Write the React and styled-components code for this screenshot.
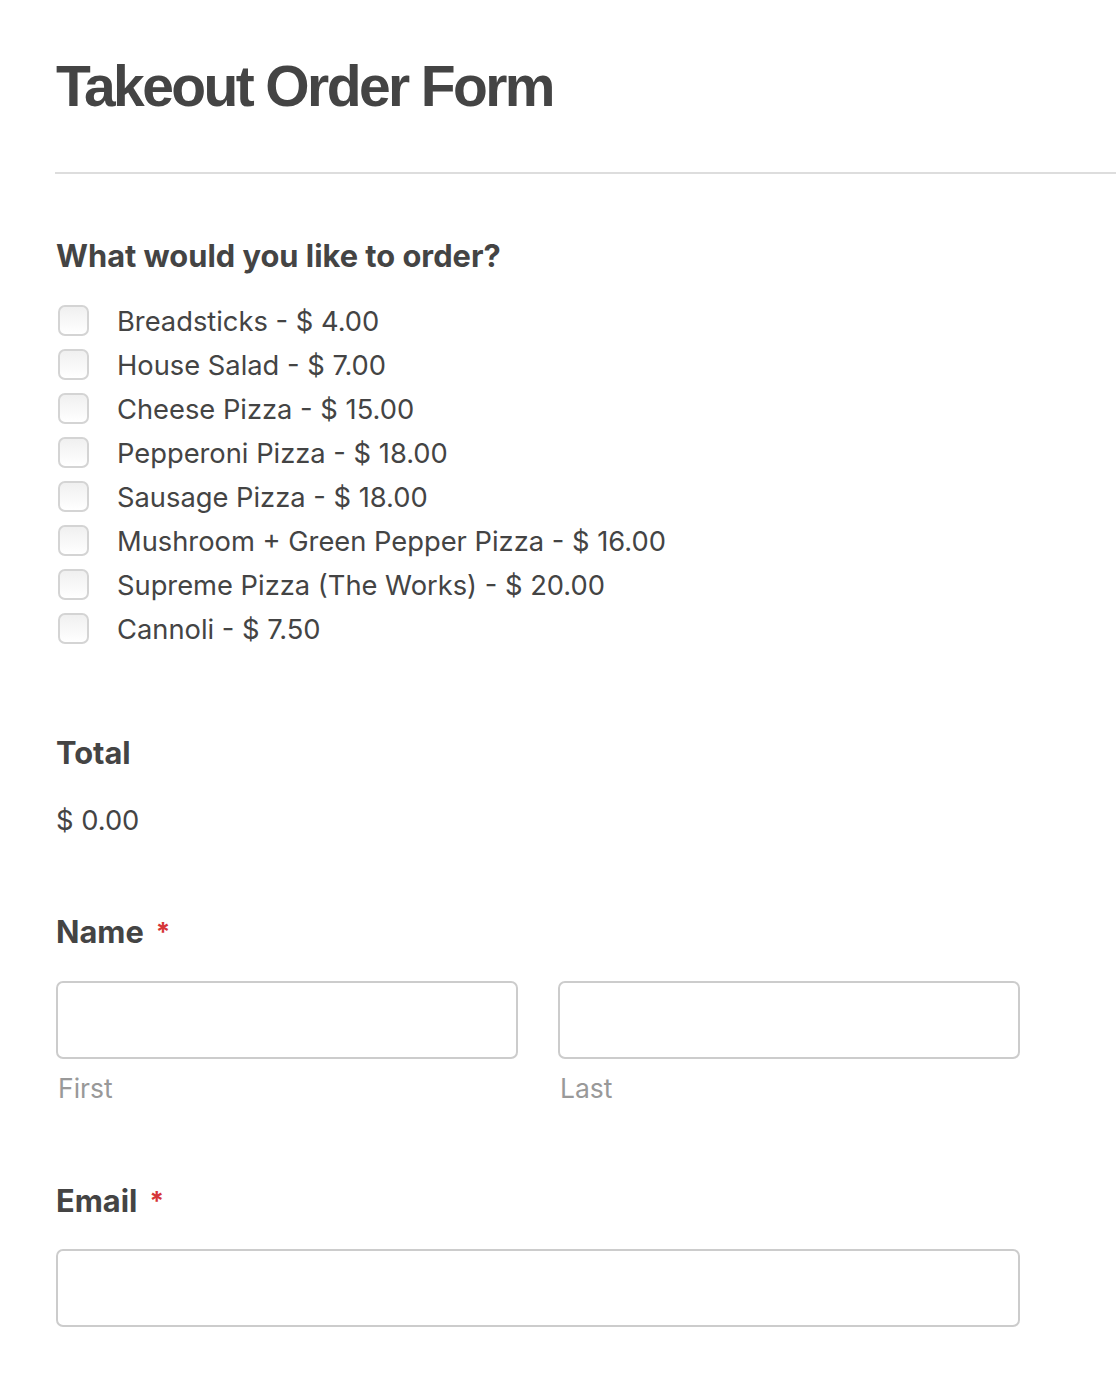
import React from "react";
import styled, { createGlobalStyle } from "styled-components";

const GlobalStyle = createGlobalStyle`
  body {
    margin: 0;
    background: #ffffff;
    font-family: Inter, "Noto Sans", sans-serif;
    color: #444444;
  }
`;

const Page = styled.div`
  padding: 52px 0 60px 56px;
`;

const Title = styled.h1`
  margin: 0;
  font-family: "Liberation Sans", Arial, sans-serif;
  font-size: 57px;
  font-weight: 700;
  line-height: 68px;
  letter-spacing: -2.6px;
  color: #444444;
`;

const Rule = styled.hr`
  border: none;
  border-top: 2px solid #dddddd;
  margin: 52px 0 0 -1px;
`;

const Form = styled.form`
  width: 964px;
  padding-top: 62px;
`;

const Field = styled.div`
  margin-bottom: ${(p) => p.$gap || 60}px;
`;

const Label = styled.div`
  font-size: 30.8px;
  font-weight: 700;
  line-height: 40px;
  color: #444444;
  margin-bottom: ${(p) => p.$gap || 28}px;
`;

const Required = styled.span`
  color: #d63638;
  font-size: 26px;
  margin-left: 12px;
  vertical-align: top;
`;

const Options = styled.div`
  display: flex;
  flex-direction: column;
  gap: 10px;
`;

const Option = styled.label`
  display: flex;
  align-items: flex-start;
  gap: 28px;
  font-size: 27.3px;
  line-height: 32px;
  color: #444444;
  padding-top: 2px;
`;

const Box = styled.span`
  width: 31px;
  height: 31px;
  box-sizing: border-box;
  margin: -1px 0 0 2px;
  border: 2px solid #d4d4d4;
  border-radius: 7px;
  background: linear-gradient(#f0f0f0, #ffffff);
  flex-shrink: 0;
`;

const Amount = styled.div`
  font-size: 27.3px;
  line-height: 32px;
  padding-top: 2px;
`;

const Row = styled.div`
  display: grid;
  grid-template-columns: 1fr 1fr;
  column-gap: 40px;
`;

const Input = styled.input`
  display: block;
  width: 100%;
  height: 78px;
  box-sizing: border-box;
  border: 2px solid #cccccc;
  border-radius: 7px;
  background: #ffffff;
  font: inherit;
  font-size: 27px;
  padding: 0 16px;
`;

const Sub = styled.div`
  font-size: 26.5px;
  line-height: 32px;
  color: #999999;
  margin-top: 13px;
  padding-left: 2px;
`;

const items = [
  "Breadsticks - $ 4.00",
  "House Salad - $ 7.00",
  "Cheese Pizza - $ 15.00",
  "Pepperoni Pizza - $ 18.00",
  "Sausage Pizza - $ 18.00",
  "Mushroom + Green Pepper Pizza - $ 16.00",
  "Supreme Pizza (The Works) - $ 20.00",
  "Cannoli - $ 7.50",
];

export default function App() {
  return (
    <Page>
      <GlobalStyle />
      <Title>Takeout Order Form</Title>
      <Rule />
      <Form>
        <Field $gap={87}>
          <Label>What would you like to order?</Label>
          <Options>
            {items.map((item) => (
              <Option key={item}>
                <Box />
                {item}
              </Option>
            ))}
          </Options>
        </Field>
        <Field $gap={75}>
          <Label $gap={30}>Total</Label>
          <Amount>$ 0.00</Amount>
        </Field>
        <Field $gap={77}>
          <Label $gap={29}>
            Name<Required>*</Required>
          </Label>
          <Row>
            <div>
              <Input />
              <Sub>First</Sub>
            </div>
            <div>
              <Input />
              <Sub>Last</Sub>
            </div>
          </Row>
        </Field>
        <Field>
          <Label $gap={28}>
            Email<Required>*</Required>
          </Label>
          <Input />
        </Field>
      </Form>
    </Page>
  );
}
